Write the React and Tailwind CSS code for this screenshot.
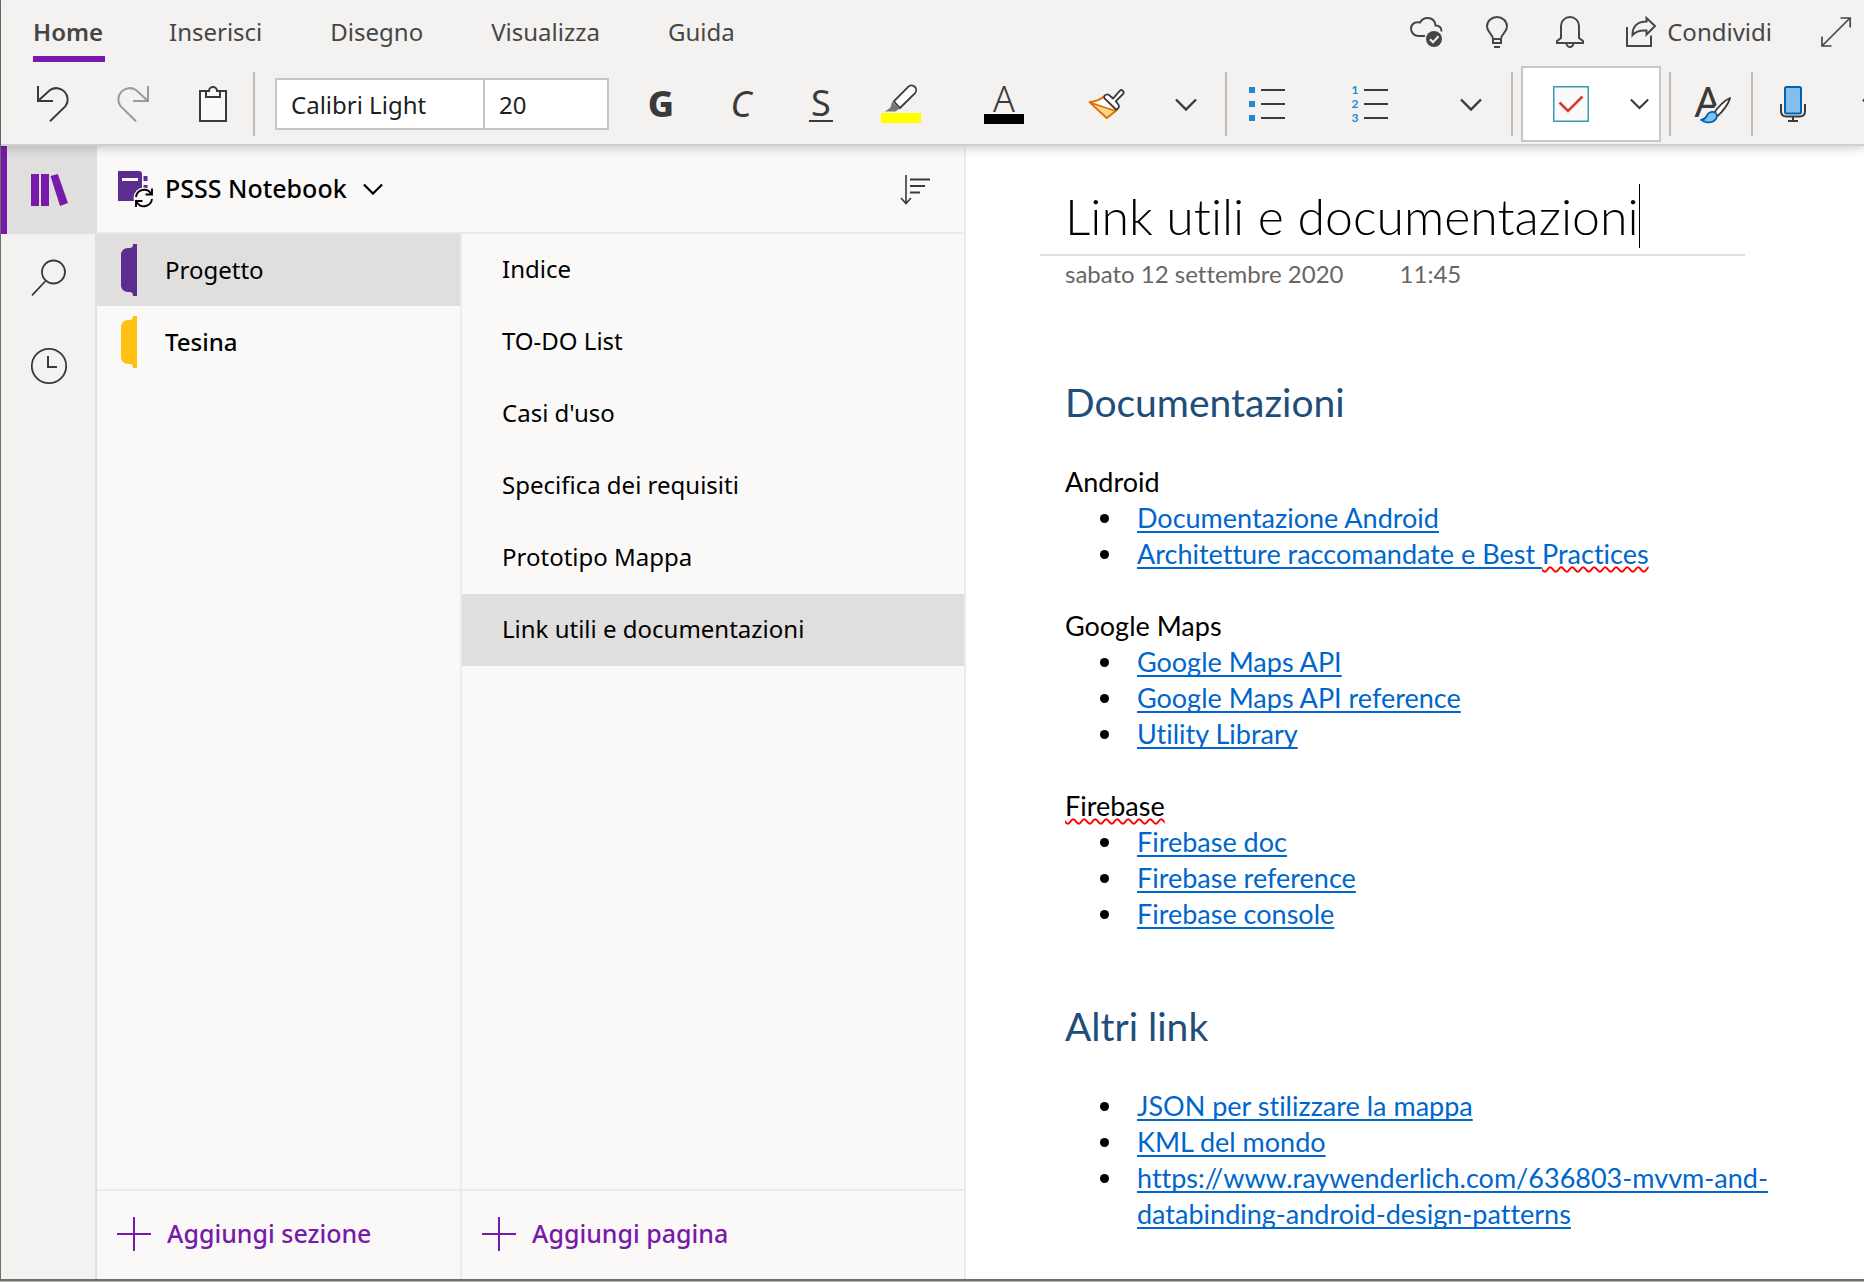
import React from "react";

function Svg({ x, y, w, h, children }) {
  return (
    <svg width={w} height={h} viewBox={`${x} ${y} ${w} ${h}`} fill="none" aria-hidden="true" className="shrink-0 overflow-visible">
      {children}
    </svg>
  );
}

const INK = "#3b3a39";
const TOP_INK = "#484644";
const PURPLE = "#7719aa";

function Chevron({ size = 22, color = INK }) {
  return (
    <svg width={size} height={size / 2 + 2} viewBox="0 0 22 13" fill="none" stroke={color} strokeWidth="2.4" aria-hidden="true">
      <path d="M1 1.5 11 11.5 21 1.5" />
    </svg>
  );
}

const UNDO_PATH = "M38 86V101H53M38 101 50 90A11.4 11.4 0 0 1 65.5 106.2L50 121.3";

const UndoIcon = () => (
  <Svg x={36} y={85} w={34} h={38}>
    <path d={UNDO_PATH} stroke={INK} strokeWidth="2" />
  </Svg>
);

const RedoIcon = () => (
  <Svg x={36} y={85} w={34} h={38}>
    <path d={UNDO_PATH} transform="translate(106 0) scale(-1 1)" stroke="#9b9a99" strokeWidth="2" />
  </Svg>
);

const PasteIcon = () => (
  <Svg x={198} y={85} w={30} h={38}>
    <rect x="200" y="91" width="26" height="30" fill="#fafafa" stroke={INK} strokeWidth="2" />
    <path d="M206 91V97H220V91H217A4 4 0 0 0 209 91Z" fill="#fafafa" stroke={INK} strokeWidth="2" />
  </Svg>
);

const HighlighterIcon = () => (
  <Svg x={881} y={85} w={40} h={40}>
    <rect x="881" y="114" width="40" height="10" fill="#ffff00" />
    <path d="M892 102.5 899.5 109.5 895.5 112.4H885L890.5 108.5Z" fill="#797775" />
    <path d="M893.8 102.4 908.2 87.8A4.6 4.6 0 0 1 914.8 94.3L900 109Z" fill="#fff" stroke={INK} strokeWidth="1.8" strokeLinejoin="round" />
  </Svg>
);

const BrushIcon = () => (
  <Svg x={1088} y={88} w={38} h={32}>
    <path d="M1089.5 102.2C1095 101.5 1099.5 100 1103.5 97L1116.5 110.5 1106.7 118Z" fill="#fff" />
    <path d="M1092 103 1116 111 1106.7 118Z" fill="#fbd88a" />
    <path d="M1089.5 102.2C1095 101.5 1099.5 100 1103.5 97L1116.5 110.5 1106.7 118ZM1090 102.5 1115.5 111" stroke="#e06c00" strokeWidth="1.8" strokeLinejoin="round" />
    <path d="M1104.6 98.3C1103.3 96.8 1104.8 94.6 1107 94.3 1108.7 94 1109.8 95.4 1113 98.6L1119.7 90.8A2.3 2.3 0 0 1 1123 94L1115.7 101.3C1118.5 104 1119.6 105.2 1118.8 107.2 1118.2 108.8 1117.2 109.4 1116.3 109.6Z" fill="#fff" stroke={INK} strokeWidth="1.8" strokeLinejoin="round" />
  </Svg>
);

const BulletsIcon = () => (
  <Svg x={1250} y={85} w={38} h={36}>
    <path d="M1250 86H1256V92H1250ZM1250 100H1256V106H1250ZM1250 114H1256V120H1250Z" fill="#1e8bcd" />
    <path d="M1262 89H1286M1262 103H1286M1262 117H1286" stroke={INK} strokeWidth="2" />
  </Svg>
);

const NumbersIcon = () => (
  <span className="flex items-center gap-1">
    <span className="flex w-2 flex-col font-['Lato',sans-serif] text-xs leading-[14px] font-bold text-[#1e8bcd]">
      <span>1</span>
      <span>2</span>
      <span>3</span>
    </span>
    <Svg x={1363} y={85} w={26} h={36}>
      <path d="M1364 89H1388M1364 103H1388M1364 117H1388" stroke={INK} strokeWidth="2" />
    </Svg>
  </span>
);

const TodoTagIcon = () => (
  <Svg x={1554} y={86} w={36} h={36}>
    <rect x="1554.75" y="86.75" width="34.5" height="34.5" fill="#fafafa" stroke="#3f97b5" strokeWidth="1.5" />
    <path d="M1560.5 102.5 1569 111 1583.5 96.5" stroke="#d83b30" strokeWidth="2.6" />
  </Svg>
);

const StylesIcon = () => (
  <Svg x={1695} y={85} w={38} h={40}>
    <text x="1695.5" y="117.5" fontSize="42" fill={INK} fontFamily="Noto Sans">A</text>
    <path d="M1731 99C1726 101 1719 108 1715.5 113.5L1718.5 117C1723.5 113 1730 104 1731 99Z" fill="#fff" stroke="#f3f2f1" strokeWidth="6" />
    <path d="M1731 99C1726 101 1719 108 1715.5 113.5L1718.5 117C1723.5 113 1730 104 1731 99Z" fill="#fff" stroke={INK} strokeWidth="1.8" strokeLinejoin="round" />
    <path d="M1702 120.8C1706.5 120.5 1707 118 1708.5 115.5 1710.5 112.3 1715 112 1717 114.3 1719 117 1717.5 120.5 1714.5 122.3 1711 124.2 1705.5 123.5 1702 120.8Z" fill="#83beec" stroke="#0063b1" strokeWidth="1.8" strokeLinejoin="round" />
  </Svg>
);

const MicIcon = () => (
  <Svg x={1779} y={85} w={28} h={38}>
    <rect x="1785" y="87" width="16" height="26.5" rx="1.5" fill="#83beec" stroke="#0063b1" strokeWidth="2" />
    <path d="M1781 104V111Q1781 116.5 1786.5 116.5H1799.500Q1805 116.5 1805 111V104M1793 117V121M1788 121H1798" stroke={INK} strokeWidth="2" />
  </Svg>
);

const CloudIcon = () => (
  <Svg x={1410} y={16} w={34} h={34}>
    <path d="M1426 37H1419.500A7.500 7.500 0 0 1 1412 29.800C1412 25 1416 22.300 1421 23.500 1423 20 1425.500 19 1428.500 19 1433 19 1436 22 1436.500 26.500 1440.500 26.500 1442.500 29 1442.500 32.500" stroke={TOP_INK} strokeWidth="2" />
    <circle cx="1435" cy="40" r="8" fill={TOP_INK} />
    <path d="M1431 40.300 1434 43.300 1439.500 37.300" stroke="#f3f2f1" strokeWidth="2" />
  </Svg>
);

const BulbIcon = () => (
  <Svg x={1486} y={15} w={24} h={34}>
    <path d="M1494 39C1494 34 1488 32.500 1488 26.500A10 9.500 0 0 1 1508 26.500C1508 32.500 1502 34 1502 39V43H1494ZM1494 39H1502M1495 47H1501" stroke={TOP_INK} strokeWidth="2" />
  </Svg>
);

const BellIcon = () => (
  <Svg x={1556} y={15} w={30} h={34}>
    <path d="M1558 43V41L1562 38V26A9 9 0 0 1 1580 26V38L1584 41V43ZM1567.500 43A3.500 4 0 0 0 1574.500 43" stroke={TOP_INK} strokeWidth="2" />
  </Svg>
);

const ShareIcon = () => (
  <Svg x={1626} y={17} w={32} h={34}>
    <path d="M1628 29V48H1652V37.500M1633.500 37C1633.500 29 1638 23.500 1647.500 23.500V20L1656 28 1647.500 36.500V32.500C1641 32 1637 33 1633.500 37Z" stroke={TOP_INK} strokeWidth="2" />
  </Svg>
);

const ExpandIcon = () => (
  <Svg x={1820} y={16} w={32} h={32}>
    <path d="M1822 46 1850 18M1840.500 18H1850.200V27.500M1822 36.500V46H1831.500" stroke={TOP_INK} strokeWidth="1.700" />
  </Svg>
);

const LibraryIcon = () => (
  <Svg x={31} y={173} w={38} h={34}>
    <path d="M31 174H39V206H31ZM41 174H49V206H41ZM50.500 176 57.800 174 68 203 60 206Z" fill={PURPLE} />
  </Svg>
);

const SearchIcon = () => (
  <Svg x={31} y={259} w={36} h={38}>
    <circle cx="53.5" cy="272" r="11.5" stroke={INK} strokeWidth="1.8" />
    <path d="M45.5 281 32 295.3" stroke={INK} strokeWidth="1.8" />
  </Svg>
);

const ClockIcon = () => (
  <Svg x={30} y={347} w={38} h={38}>
    <circle cx="49" cy="366" r="17.2" stroke={INK} strokeWidth="1.8" />
    <path d="M48 356V367H57" stroke={INK} strokeWidth="2" />
  </Svg>
);

const NotebookIcon = () => (
  <Svg x={117} y={172} w={36} h={38}>
    <path d="M118 173H139Q142 173 142 176V203H118Z" fill="#5c2d91" />
    <path d="M143.500 178H147.500V183H143.500ZM143.500 187H147.500V191H143.500Z" fill="#5c2d91" />
    <path d="M122 181.500H138" stroke="#fff" strokeWidth="3" />
    <circle cx="144" cy="200" r="10.500" fill="#faf9f8" />
    <path d="M136 199A8.200 8.200 0 0 1 151 195.500M152 201A8.200 8.200 0 0 1 137 204.500M152 190.500V196.500H145.500M136 209V203H142.500" stroke="#000" strokeWidth="1.900" />
  </Svg>
);

const SortIcon = () => (
  <Svg x={900} y={173} w={32} h={32}>
    <path d="M906 175V203M901 198 906 203.500 911 198" stroke={INK} strokeWidth="1.600" />
    <path d="M910 179.500H930M910 186H925M910 192.500H920" stroke={INK} strokeWidth="2" />
  </Svg>
);

const SectionTab = ({ color }) => (
  <svg width="16" height="52" viewBox="0 0 16 52" fill={color} aria-hidden="true">
    <path d="M16 0H12C12 3 11 4 8 4H7C3 4 0 7 0 11V41C0 45 3 48 7 48H8C11 48 12 49 12 52H16Z" />
  </svg>
);

const PlusIcon = () => (
  <svg width="34" height="34" viewBox="0 0 34 34" stroke={PURPLE} strokeWidth="2" aria-hidden="true">
    <path d="M17 0V34M0 17H34" />
  </svg>
);

const Divider = () => <span className="h-16 w-0.5 shrink-0 bg-[#bebbb8]" />;

function Tool({ label, className = "w-20", children }) {
  return (
    <button type="button" aria-label={label} className={`flex h-full shrink-0 items-center justify-center ${className}`}>
      {children}
    </button>
  );
}

const TABS = ["Inserisci", "Disegno", "Visualizza", "Guida"];

function Header() {
  return (
    <header className="relative z-10 border-b-2 border-[#d0cfce] bg-[#f3f2f1] shadow-[0_2px_10px_rgba(0,0,0,0.2)]">
      <div className="flex h-16 items-center justify-between pr-3 pl-8 text-[#484644]">
        <nav className="flex h-full gap-17">
          <button type="button" className="relative -mr-1 flex h-full w-18 items-center font-semibold">
            Home
            <span className="absolute inset-x-0 bottom-0.5 h-1.5 bg-[#7719aa]" />
          </button>
          {TABS.map((tab) => (
            <button type="button" key={tab} className="flex h-full items-center">
              {tab}
            </button>
          ))}
        </nav>
        <div className="flex h-full items-center">
          <button type="button" aria-label="Stato sincronizzazione" className="mr-[42px]"><CloudIcon /></button>
          <button type="button" aria-label="Suggerimenti" className="mr-[46px]"><BulbIcon /></button>
          <button type="button" aria-label="Notifiche" className="mr-10"><BellIcon /></button>
          <button type="button" className="mr-12 flex items-center gap-2.5"><ShareIcon />Condividi</button>
          <button type="button" aria-label="Schermo intero"><ExpandIcon /></button>
        </div>
      </div>
      <div className="flex h-20 items-center overflow-hidden pl-3 text-[#3b3a39]">
        <Tool label="Annulla"><UndoIcon /></Tool>
        <Tool label="Ripeti"><RedoIcon /></Tool>
        <Tool label="Incolla"><PasteIcon /></Tool>
        <Divider />
        <input aria-label="Tipo di carattere" defaultValue="Calibri Light" className="ml-5 h-[52px] w-[210px] shrink-0 border-2 border-[#c8c6c4] bg-white px-3.5 text-[#201f1e]" />
        <input aria-label="Dimensione carattere" defaultValue="20" className="mr-3 -ml-0.5 h-[52px] w-[126px] shrink-0 border-2 border-[#c8c6c4] bg-white px-3.5 text-[#201f1e]" />
        <Tool label="Grassetto"><span className="text-4xl font-extrabold">G</span></Tool>
        <Tool label="Corsivo"><span className="text-4xl italic">C</span></Tool>
        <Tool label="Sottolineato">
          <span className="flex h-9 w-6 items-center justify-center border-b-2 border-[#3b3a39] text-4xl">S</span>
        </Tool>
        <Tool label="Evidenziatore"><HighlighterIcon /></Tool>
        <Tool label="Colore carattere" className="w-[126px]">
          <span className="flex w-10 flex-col items-center">
            <span className="text-4xl leading-[30px] font-light">A</span>
            <span className="h-2.5 w-full bg-black" />
          </span>
        </Tool>
        <Tool label="Copia formato"><BrushIcon /></Tool>
        <Tool label="Altre opzioni carattere" className="w-[78px]"><Chevron /></Tool>
        <Divider />
        <Tool label="Elenco puntato" className="w-[82px]"><BulletsIcon /></Tool>
        <Tool label="Elenco numerato" className="w-[122px]"><NumbersIcon /></Tool>
        <Tool label="Altre opzioni paragrafo"><Chevron /></Tool>
        <Divider />
        <div className="mx-2 flex h-[76px] w-[140px] shrink-0 items-center border-2 border-[#c8c6c4] bg-white">
          <Tool label="Attività" className="w-24"><TodoTagIcon /></Tool>
          <Tool label="Altri tag" className="w-10"><Chevron size={19} /></Tool>
        </div>
        <Divider />
        <Tool label="Stili" className="w-20 pl-1"><StylesIcon /></Tool>
        <Divider />
        <Tool label="Dettatura"><MicIcon /></Tool>
        <Tool label="Altro"><Chevron /></Tool>
      </div>
    </header>
  );
}

function Rail() {
  return (
    <nav className="flex w-24 shrink-0 flex-col bg-[#f3f2f1]">
      <button type="button" aria-label="Blocchi appunti" className="flex h-22 items-center border-l-6 border-[#7719aa] bg-[#e1dfdd] pl-6">
        <LibraryIcon />
      </button>
      <div className="flex flex-1 flex-col border-r-2 border-[#e1dfdd] pl-0.5">
        <button type="button" aria-label="Cerca" className="flex h-22 items-center justify-center"><SearchIcon /></button>
        <button type="button" aria-label="Recenti" className="flex h-22 items-center justify-center"><ClockIcon /></button>
      </div>
    </nav>
  );
}

const SECTIONS = [
  { name: "Progetto", color: "#5c2d91", active: true },
  { name: "Tesina", color: "#ffc114", active: false },
];

const PAGES = [
  "Indice",
  "TO-DO List",
  "Casi d'uso",
  "Specifica dei requisiti",
  "Prototipo Mappa",
  "Link utili e documentazioni",
];

function AddButton({ children }) {
  return (
    <button type="button" className="mt-auto flex h-[90px] items-center gap-4 border-t-2 border-[#edebe9] pb-0.5 pl-5 text-[25px] font-medium text-[#7719aa]">
      <PlusIcon />
      {children}
    </button>
  );
}

function Navigator() {
  return (
    <aside className="flex w-[869px] shrink-0 flex-col border-r-2 border-[#edebe9] bg-[#faf9f8] text-black">
      <div className="flex h-22 items-center justify-between border-b-2 border-[#edebe9] pr-8 pl-5">
        <button type="button" className="flex items-center gap-3 text-[25px] font-medium">
          <NotebookIcon />
          PSSS Notebook
          <span className="ml-1"><Chevron size={20} color="#000" /></span>
        </button>
        <button type="button" aria-label="Ordina"><SortIcon /></button>
      </div>
      <div className="flex flex-1">
        <div className="flex w-[365px] flex-col border-r-2 border-[#edebe9]">
          {SECTIONS.map((s) => (
            <button
              type="button"
              key={s.name}
              className={`flex h-18 items-center gap-7 pl-6 ${s.active ? "bg-[#e1dfdd]" : "font-medium"}`}
            >
              <SectionTab color={s.color} />
              {s.name}
            </button>
          ))}
          <AddButton>Aggiungi sezione</AddButton>
        </div>
        <div className="flex flex-1 flex-col">
          {PAGES.map((p, i) => (
            <button
              type="button"
              key={p}
              className={`flex h-18 items-center pb-0.5 pl-10 ${i === PAGES.length - 1 ? "bg-[#e1dfdd]" : ""}`}
            >
              {p}
            </button>
          ))}
          <AddButton>Aggiungi pagina</AddButton>
        </div>
      </div>
    </aside>
  );
}

const LINK_LINE = "underline decoration-2 underline-offset-[3px] [text-decoration-skip-ink:none]";
const MISSPELLED = "underline decoration-wavy decoration-[#ff0000] decoration-2 underline-offset-2 [text-decoration-skip-ink:none]";

function Links({ items }) {
  return (
    <ul className="pl-[35px]">
      {items.map((item) => (
        <li key={item.text} className="flex gap-7">
          <span className="mt-3.5 size-[9px] shrink-0 rounded-full bg-black" />
          <a href="#" className="text-[#0066cc]">
            <span className={LINK_LINE}>{item.text}</span>
            {item.flagged && <span className={MISSPELLED}>{item.flagged}</span>}
          </a>
        </li>
      ))}
    </ul>
  );
}

const GROUPS = [
  {
    title: "Android",
    items: [
      { text: "Documentazione Android" },
      { text: "Architetture raccomandate e Best ", flagged: "Practices" },
    ],
  },
  {
    title: "Google Maps",
    items: [{ text: "Google Maps API" }, { text: "Google Maps API reference" }, { text: "Utility Library" }],
  },
  {
    title: "Firebase",
    flagged: true,
    items: [{ text: "Firebase doc" }, { text: "Firebase reference" }, { text: "Firebase console" }],
  },
];

const OTHER = [
  { text: "JSON per stilizzare la mappa" },
  { text: "KML del mondo" },
  { text: "https://www.raywenderlich.com/636803-mvvm-and-databinding-android-design-patterns" },
];

function Note() {
  return (
    <main className="min-w-0 flex-1 bg-white pt-[38px] pr-12 pl-[74px] font-['Lato',sans-serif] text-[27px] leading-9 text-black [font-variant-ligatures:none]">
      <div className="flex max-w-[705px] border-b-2 border-[#e1e1e1] pb-1.5 pl-[25px]">
        <h1 className="border-r border-black text-[50px] leading-[64px] font-light whitespace-nowrap">Link utili e documentazioni</h1>
      </div>
      <div className="pl-[25px]">
        <p className="mt-0.5 flex gap-14 text-2xl leading-8 text-[#666666]">
          <span>sabato 12 settembre 2020</span>
          <span>11:45</span>
        </p>
        <h2 className="mt-22 text-[39px] leading-[48px] text-[#1e4e79]">Documentazioni</h2>
        <div className="mt-[38px] flex flex-col gap-9">
          {GROUPS.map((g) => (
            <section key={g.title}>
              <h3><span className={g.flagged ? MISSPELLED : ""}>{g.title}</span></h3>
              <Links items={g.items} />
            </section>
          ))}
        </div>
        <h2 className="mt-[70px] text-[39px] leading-[48px] text-[#1e4e79]">Altri link</h2>
        <div className="mt-[38px]">
          <Links items={OTHER} />
        </div>
      </div>
    </main>
  );
}

export default function App() {
  return (
    <div className="flex min-h-screen flex-col bg-[#b5b3b1] pb-px font-['Noto_Sans',sans-serif] text-2xl">
      <div className="flex flex-1 flex-col border-b-2 border-l border-[#706e6b]">
        <Header />
        <div className="flex flex-1">
          <Rail />
          <Navigator />
          <Note />
        </div>
      </div>
    </div>
  );
}
